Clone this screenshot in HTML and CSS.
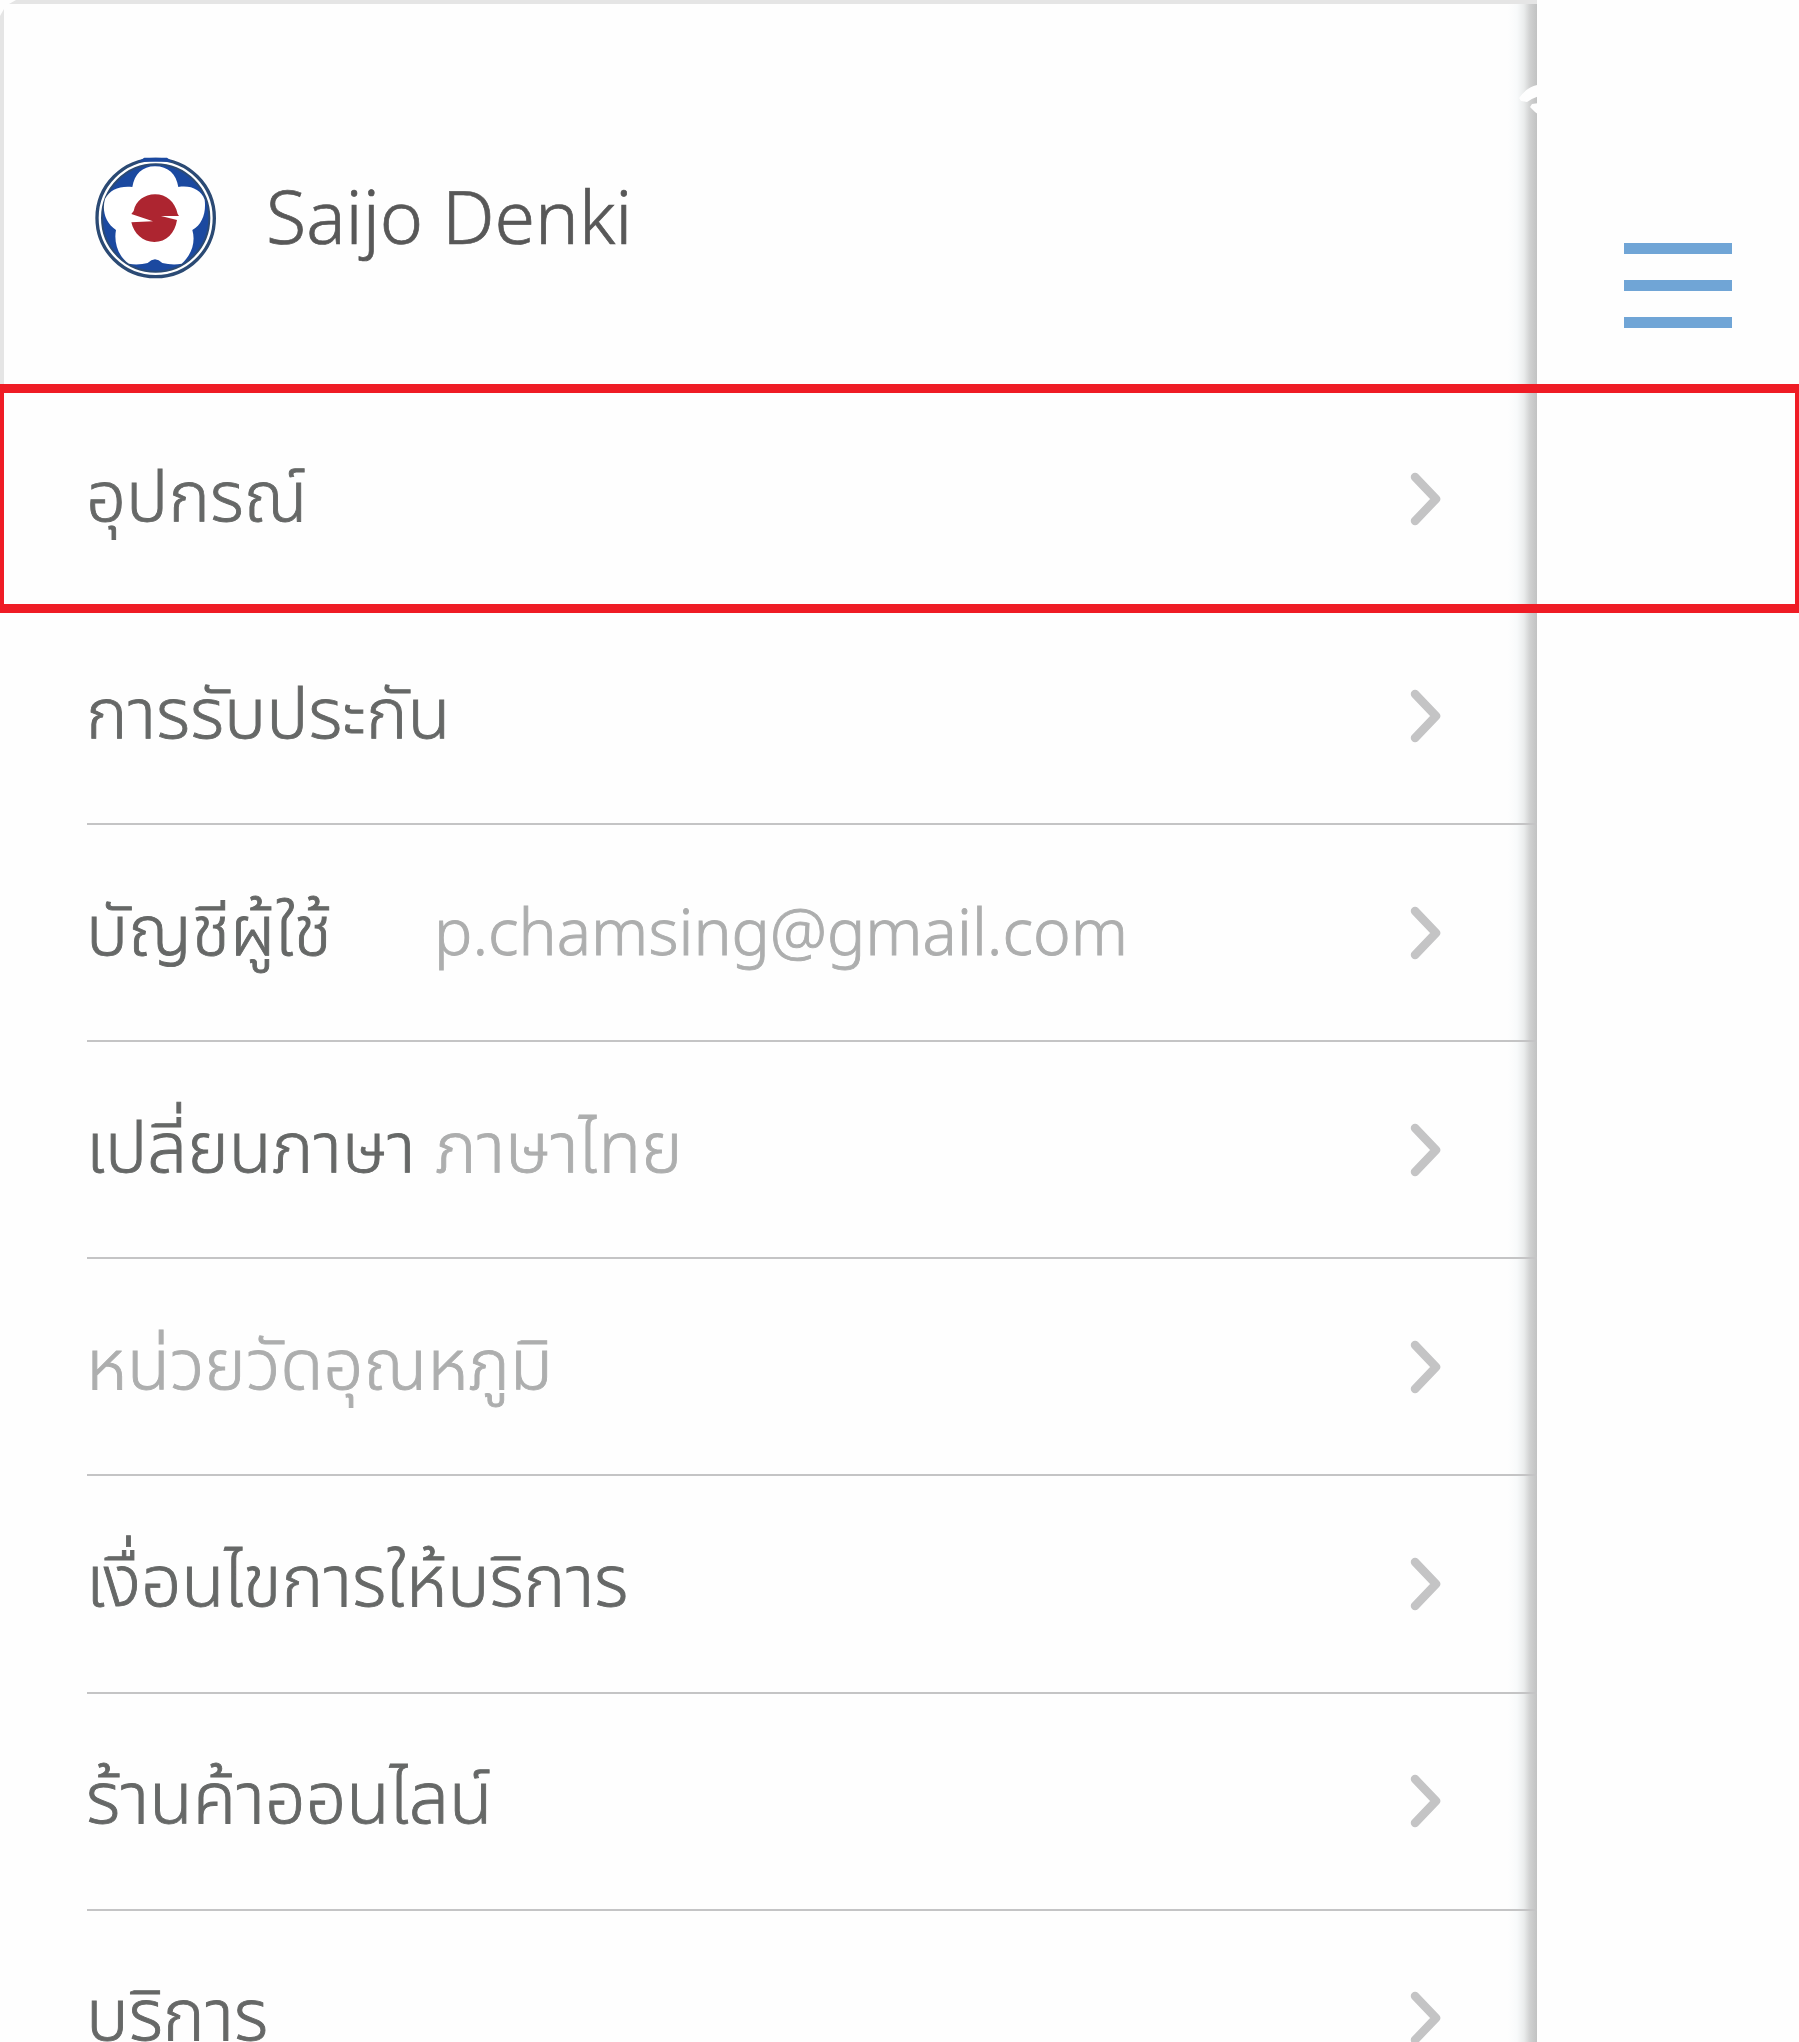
FILE: index.html
```html
<!DOCTYPE html>
<html lang="th">
<head>
<meta charset="utf-8">
<title>Saijo Denki</title>
<link rel="stylesheet" href="styles.css">
</head>
<body>
<svg class="defs" aria-hidden="true"><symbol id="chevron" viewBox="0 0 32 54"><path d="M5 5 26 27 5 49"/></symbol></svg>
<div class="screen">
  <aside class="drawer">
    <header class="brand">
      <svg class="logo" viewBox="78 78 366 366">
        <circle cx="260" cy="261" r="176" fill="#fff" stroke="#2b4a74" stroke-width="10"/>
        <circle cx="260" cy="261" r="161" fill="#1b49a0" stroke="#2b4a74" stroke-width="6"/>
        <path d="M226 80H294L310 92H208Z" fill="#1b49a0"/>
        <path d="M190 168C196 130 220 106 258 106C298 106 322 130 328 168C366 162 396 176 407 206C412 244 400 280 370 297C380 330 370 370 338 398C318 402 298 400 280 396Q258 374 236 396C220 400 198 402 180 398C146 376 134 332 141 297C110 276 98 240 108 204C122 176 152 164 190 168Z" fill="#fff"/>
        <path d="M194 240C200 210 226 190 258 190C292 190 318 212 326 249L330 255H276L324 267C318 306 292 333 256 333C222 333 194 308 187 274L252 271L187 249Z" fill="#ad2530"/>
      </svg>
      <h1 class="brand-name">Saijo Denki</h1>
    </header>
    <nav class="menu">
      <a class="row"><span class="label">อุปกรณ์</span><svg class="chevron"><use href="#chevron"/></svg></a>
      <a class="row"><span class="label">การรับประกัน</span><svg class="chevron"><use href="#chevron"/></svg></a>
      <a class="row"><span class="label">บัญชีผู้ใช้</span><span class="value email">p.chamsing@gmail.com</span><svg class="chevron"><use href="#chevron"/></svg></a>
      <a class="row"><span class="label">เปลี่ยนภาษา</span><span class="value">ภาษาไทย</span><svg class="chevron"><use href="#chevron"/></svg></a>
      <a class="row muted"><span class="label">หน่วยวัดอุณหภูมิ</span><svg class="chevron"><use href="#chevron"/></svg></a>
      <a class="row"><span class="label terms">เงื่อนไขการให้บริการ</span><svg class="chevron"><use href="#chevron"/></svg></a>
      <a class="row"><span class="label shop">ร้านค้าออนไลน์</span><svg class="chevron"><use href="#chevron"/></svg></a>
      <a class="row"><span class="label shop">บริการ</span><svg class="chevron"><use href="#chevron"/></svg></a>
    </nav>
  </aside>
  <main class="page">
    <div class="burger"><i></i><i></i><i></i></div>
  </main>
  <svg class="signal" viewBox="0 0 20 32"><path d="M0 14Q8 3 18 1H20V12Q14 14 8 18L2 17ZM20 19V31L16 28L11 23L13 20Z"/></svg>
  <div class="highlight"></div>
</div>
</body>
</html>
```
FILE: styles.css
```css
* { box-sizing: border-box; }
body { margin: 0; background: #fefefe; font-family: "Noto Sans", "Noto Sans Thai", sans-serif; font-weight: 300; }
.defs { position: absolute; width: 0; height: 0; }
.screen { position: relative; display: flex; width: 1799px; height: 2042px; overflow: hidden; }
.drawer { width: 1537px; background: linear-gradient(to right, transparent 1508px, #f8fafb 1517px, #eaecec 1524px, #d0d1d1 1530px, #c1c2c2 1537px); }
.brand { display: flex; align-items: center; height: 391px; padding-left: 91px; border-top: 4px solid #e5e5e5; border-left: 4px solid #e5e5e5; clip-path: polygon(0 16px, 4px 9px, 9px 4px, 16px 0, 100% 0, 100% 100%, 0 100%); }
.logo { width: 122px; height: 122px; margin-top: 41px; }
.brand-name { margin: 37px 0 0 49px; font-size: 73.500px; font-weight: 300; line-height: 100px; color: #585858; white-space: nowrap; -webkit-text-stroke: 0.700px #585858; }
.row { display: flex; align-items: center; height: 217.100px; margin-left: 87px; padding-right: 95px; border-bottom: 2px solid #c4c4c5; color: #666867; }
.row:first-child { border-color: transparent; }
.label, .value { font-size: 70.500px; font-weight: 300; line-height: 100px; white-space: nowrap; margin-top: -10px; -webkit-text-stroke: 0.900px currentColor; }
.label { width: 349px; margin-left: -1px; }
.label.terms { font-size: 71px; }
.label.shop { font-size: 71.300px; }
.value { color: #adaeae; }
.value.email { font-size: 64px; margin: -4px 0 0 -1px; letter-spacing: 0.050px; }
.muted { color: #adaeae; }
.chevron { width: 32px; height: 54px; margin-left: auto; fill: none; stroke: #c4c4c5; stroke-width: 8.500; stroke-linecap: round; stroke-linejoin: round; }
.page { flex: 1; padding: 243px 0 0 87px; }
.burger { display: flex; flex-direction: column; gap: 26px; width: 108px; }
.burger i { height: 11px; background: #70a5d6; }
.signal { position: absolute; left: 1519px; top: 84px; width: 20px; height: 32px; fill: #fefefe; }
.highlight { position: absolute; left: 0; top: 384px; width: 1799px; height: 229px; border: 9px solid #ef1c25; border-left-width: 4px; border-right-width: 4px; }
```
